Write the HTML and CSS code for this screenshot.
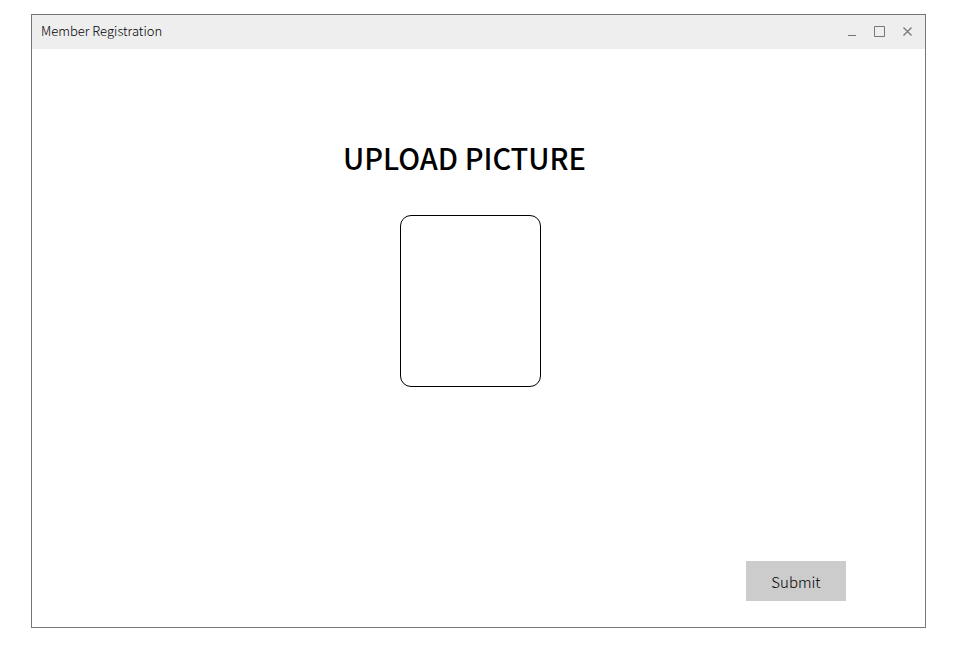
FILE: index.html
```html
<!DOCTYPE html>
<html lang="en">
<head>
<meta charset="utf-8">
<meta name="viewport" content="width=device-width, initial-scale=1">
<title>Member Registration</title>
<link rel="stylesheet" href="styles.css">
</head>
<body>
<section class="window">
  <header class="titlebar">
    <h1 class="title">Member Registration</h1>
    <div class="controls">
      <button class="control" type="button" aria-label="Minimize"><svg viewBox="0 0 12 12"><path d="M2 9.5h8"/></svg></button>
      <button class="control" type="button" aria-label="Maximize"><svg viewBox="0 0 12 12"><path d="M.5.5h10v10H.5z"/></svg></button>
      <button class="control" type="button" aria-label="Close"><svg viewBox="0 0 12 12"><path stroke-width="1.3" d="M1.5 1.5l8 8M9.5 1.5l-8 8"/></svg></button>
    </div>
  </header>
  <form class="form">
    <div class="upload">
      <h2 class="heading" id="upload-heading">UPLOAD PICTURE</h2>
      <div class="frame">
        <label class="picture">
          <input class="file" type="file" accept="image/*" aria-labelledby="upload-heading">
        </label>
      </div>
    </div>
    <button class="submit" type="button">Submit</button>
  </form>
</section>
</body>
</html>
```
FILE: styles.css
```css
* {
  box-sizing: border-box;
}

body {
  display: flex;
  min-height: 100vh;
  margin: 0;
  padding: 14px 33px 40px 31px;
  background: #fff;
  color: #000;
  font-family: "Noto Sans CJK SC", "Noto Sans", sans-serif;
  font-weight: 300;
}

button {
  border: 0;
  font: inherit;
  color: inherit;
}

.window {
  display: flex;
  flex: 1;
  flex-direction: column;
  border: 1px solid #767676;
}

.titlebar {
  display: flex;
  align-items: center;
  justify-content: space-between;
  height: 34px;
  padding: 0 7px 0 9px;
  background: #eee;
}

.title {
  margin: 0;
  padding-bottom: 2px;
  font-size: 13px;
  font-weight: inherit;
  line-height: 20px;
}

.controls {
  display: flex;
  gap: 8px;
}

.control {
  display: flex;
  align-items: center;
  justify-content: center;
  width: 20px;
  height: 20px;
  padding: 0;
  background: none;
}

.control svg {
  width: 12px;
  height: 12px;
  fill: none;
  stroke: #767676;
}

.form {
  display: flex;
  flex: 1;
  flex-direction: column;
  justify-content: space-between;
  padding: 86px 79px 26px 0;
}

.upload {
  align-self: center;
  margin-left: 51px;
}

.heading {
  margin: 0 0 36px;
  font-size: 29px;
  font-weight: 500;
  line-height: 44px;
}

.frame {
  display: flex;
  justify-content: center;
  padding-left: 12px;
}

.picture {
  width: 141px;
  height: 172px;
  border: 1px solid #000;
  border-radius: 11px;
  overflow: hidden;
  cursor: pointer;
}

.file {
  width: 100%;
  height: 100%;
  margin: 0;
  opacity: 0;
}

.submit {
  align-self: flex-end;
  width: 100px;
  height: 40px;
  padding: 2px 0 0;
  background: #ccc;
  font-size: 15px;
  line-height: 24px;
}
```
